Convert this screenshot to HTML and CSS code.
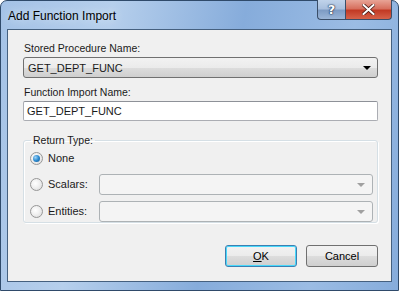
FILE: index.html
```html
<!DOCTYPE html>
<html lang="en">
<head>
  <meta charset="UTF-8">
  <title>Add Function Import</title>
  <link rel="stylesheet" href="styles.css">
</head>
<body>

  <div class="window">
    <div class="titlebar">
      <span class="title">Add Function Import</span>
      <div class="caption-buttons">
        <div class="cap-btn help">?</div>
        <div class="cap-btn close">
          <svg width="13" height="11" viewBox="0 0 13 11">
            <path d="M1.5 1 L11.5 10 M11.5 1 L1.5 10" stroke="#4a1a14" stroke-width="3.6" stroke-linecap="square"/>
            <path d="M1.5 1 L11.5 10 M11.5 1 L1.5 10" stroke="#ffffff" stroke-width="2" stroke-linecap="square"/>
          </svg>
        </div>
      </div>
    </div>

    <div class="client">
      <label class="field-label">Stored Procedure Name:</label>
      <div class="combo">
        <span class="combo-text">GET_DEPT_FUNC</span>
        <span class="arrow"></span>
      </div>

      <label class="field-label second">Function Import Name:</label>
      <div class="textbox">GET_DEPT_FUNC</div>

      <fieldset class="group">
        <legend>Return Type:</legend>
        <div class="radio-row">
          <span class="radio checked"></span>
          <span class="radio-label">None</span>
        </div>
        <div class="radio-row">
          <span class="radio"></span>
          <span class="radio-label">Scalars:</span>
          <div class="combo disabled"><span class="arrow"></span></div>
        </div>
        <div class="radio-row">
          <span class="radio"></span>
          <span class="radio-label">Entities:</span>
          <div class="combo disabled"><span class="arrow"></span></div>
        </div>
      </fieldset>

      <div class="button-row">
        <button class="btn default"><u>O</u>K</button>
        <button class="btn">Cancel</button>
      </div>
    </div>
  </div>

</body>
</html>
```

FILE: styles.css
```css
html, body {
  margin: 0;
  padding: 0;
  background: #ffffff;
}
body {
  font-family: "Liberation Sans", Arial, sans-serif;
  font-size: 10.5px;
  color: #1a1a1a;
}
.window {
  width: 399px;
  height: 291px;
  box-sizing: border-box;
  border: 1px solid #2f4a6a;
  border-radius: 7px 7px 0 0;
  background: linear-gradient(100deg, #a4c2e6 0%, #b6cfec 25%, #86acdb 55%, #9bbce4 80%, #86acdb 100%);
  padding: 0 6px 8px 6px;
  display: flex;
  flex-direction: column;
}
.titlebar {
  height: 28px;
  display: flex;
  justify-content: space-between;
  align-items: flex-start;
}
.title {
  font-size: 12px;
  color: #000;
  margin-top: 8px;
  margin-left: 1px;
  text-shadow: 0 0 8px #e6f0fa;
}
.caption-buttons {
  display: flex;
  margin-top: -1px;
}
.cap-btn {
  height: 19px;
  border: 1px solid #3a4e68;
  border-top: none;
  display: flex;
  align-items: center;
  justify-content: center;
}
.help {
  width: 27px;
  border-right: none;
  border-radius: 0 0 0 4px;
  background: linear-gradient(#c0d3ea 0%, #a9c0de 45%, #7e9cc4 55%, #9bb6d8 100%);
  color: #fff;
  font-family: "DejaVu Sans", sans-serif;
  font-weight: bold;
  font-size: 13px;
  text-shadow: 0 0 2px #1d3050, 0 0 1px #1d3050, 0 0 1px #1d3050;
}
.close {
  width: 45px;
  border-radius: 0 0 4px 0;
  background: linear-gradient(#e8a496 0%, #d7705e 45%, #c23a24 55%, #d6624a 100%);
}
.client {
  flex: 1;
  border: 1px solid #45607f;
  background: #f0f0f0;
  padding: 11px 13px 0 15px;
  display: flex;
  flex-direction: column;
}
.field-label {
  display: block;
  height: 14px;
  line-height: 14px;
  margin-bottom: 2px;
  margin-left: 1px;
}
.field-label.second {
  margin-top: 7px;
}
.combo {
  height: 21px;
  box-sizing: border-box;
  border: 1px solid #707070;
  border-radius: 3px;
  background: linear-gradient(#f2f2f2 0%, #ebebeb 50%, #dddddd 51%, #cfcfcf 100%);
  display: flex;
  align-items: center;
  padding: 0 6px 0 4px;
  font-size: 11px;
}
.combo-text {
  flex: 1;
}
.arrow {
  margin-left: auto;
  width: 0;
  height: 0;
  border-left: 4px solid transparent;
  border-right: 4px solid transparent;
  border-top: 4px solid #000;
  margin-top: 1px;
}
.combo.disabled {
  flex: 1;
  height: 21px;
  border-color: #adb2b5;
  background: #f4f4f4;
  padding-right: 7px;
}
.combo.disabled .arrow {
  border-top-color: #a0a0a0;
}
.textbox {
  height: 20px;
  box-sizing: border-box;
  border: 1px solid #abadb3;
  border-top-color: #8e9198;
  border-radius: 2px;
  background: #fff;
  line-height: 18px;
  padding-left: 3px;
  font-size: 11px;
}
.group {
  margin: 13px 0 0 0;
  padding: 2px 4px 5px 5px;
  border: 1px solid #d5dfe5;
  border-radius: 3px;
  box-shadow: inset 1px 1px 0 #fff, 1px 1px 0 #fff;
  height: 89px;
  box-sizing: border-box;
}
.group legend {
  padding: 0 2px;
  margin-left: 2px;
  line-height: 12px;
}
.radio-row {
  display: flex;
  align-items: center;
  height: 20px;
  margin-bottom: 7px;
}
.radio-row:first-of-type {
  margin-bottom: 6px;
}
.radio {
  width: 11px;
  height: 11px;
  border-radius: 50%;
  border: 1px solid #979797;
  background: radial-gradient(circle at 40% 40%, #ffffff 0%, #f2f2f2 40%, #d8d8d8 100%);
  margin-left: 1px;
  position: relative;
  flex: none;
}
.radio.checked::after {
  content: "";
  position: absolute;
  left: 2px;
  top: 2px;
  width: 7px;
  height: 7px;
  border-radius: 50%;
  background: radial-gradient(circle at 35% 35%, #9fd4f8 0%, #2d8bd0 50%, #11508a 100%);
}
.radio-label {
  margin-left: 5px;
  width: 51px;
  flex: none;
  font-size: 11px;
}
.button-row {
  display: flex;
  justify-content: flex-end;
  gap: 9px;
  margin-top: 22px;
}
.btn {
  width: 72px;
  height: 22px;
  box-sizing: border-box;
  border: 1px solid #707070;
  border-radius: 3px;
  background: linear-gradient(#f2f2f2 0%, #ebebeb 50%, #dddddd 51%, #cfcfcf 100%);
  font-family: inherit;
  font-size: 11px;
  color: #000;
  padding: 0;
}
.btn.default {
  border-color: #3c7fb1;
  box-shadow: inset 0 0 0 1px #48d8fb;
}
```
